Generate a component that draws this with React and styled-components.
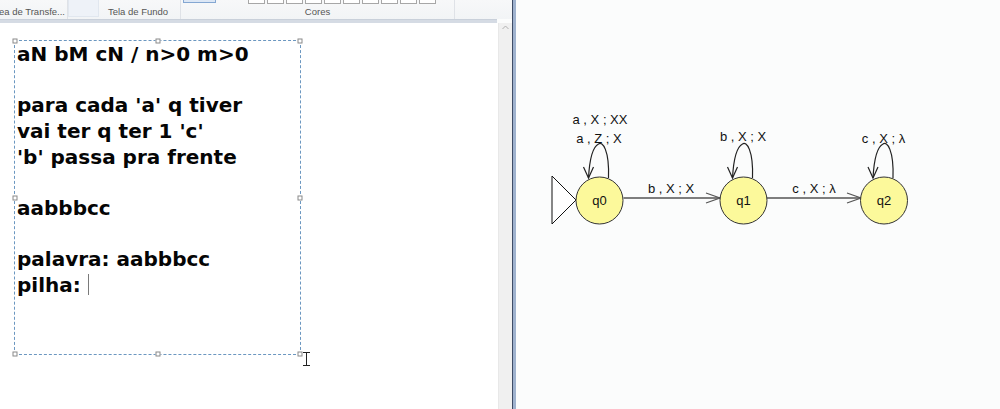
import React from 'react';
import styled, { createGlobalStyle } from 'styled-components';

const GlobalStyle = createGlobalStyle`
  html, body {
    margin: 0;
    padding: 0;
    background: #fbfcfc;
  }
  #root {
    height: 409px;
  }
`;

const Screen = styled.div`
  display: flex;
  width: 1000px;
  height: 409px;
  overflow: hidden;
`;

const PaintWindow = styled.div`
  display: flex;
  flex-direction: column;
  width: 512px;
  height: 100%;
`;

const Ribbon = styled.div`
  display: flex;
  height: 19px;
  background: linear-gradient(#f7f8f9, #f2f4f6);
  font-family: "Liberation Sans", Arial, sans-serif;
  font-size: 9.5px;
  color: #555;
`;

const Group = styled.div`
  position: relative;
  width: ${(p) => p.width}px;
  flex: ${(p) => (p.grow ? 1 : 'none')};
  border-right: ${(p) => (p.last ? 'none' : '1px solid #dfe2e7')};
  display: flex;
  align-items: flex-end;
  justify-content: ${(p) => p.align || 'center'};
  padding-bottom: 2px;
  box-sizing: border-box;
`;

const GroupLabel = styled.span`
  position: relative;
  line-height: 11px;
  white-space: nowrap;
  margin-left: ${(p) => p.offset || 0}px;
`;

const PaleButton = styled.div`
  position: absolute;
  left: 0;
  top: 0;
  width: 31px;
  height: 17px;
  background: #eef2f8;
  border: 1px solid #e1e7ef;
  border-top: none;
  box-sizing: border-box;
`;

const ColorStrip = styled.div`
  position: absolute;
  top: 0;
  left: 67px;
  display: flex;
  gap: 2px;
`;

const Swatch = styled.div`
  width: 15px;
  height: 3px;
  border: 1px solid #a7a7a7;
  border-top: none;
  background: #ffffff;
`;

const SelectedColor = styled.div`
  position: absolute;
  top: 0;
  left: 2px;
  width: 33px;
  height: 3px;
  background: #dce7f5;
  border: 1px solid #84a7d2;
  border-top: none;
  box-sizing: border-box;
`;

const RibbonEdge = styled.div`
  height: 3px;
  background: #d5dbe4;
  border-top: 1px solid #c9d0da;
  margin-right: 15px;
`;

const Workspace = styled.div`
  flex: 1;
  display: flex;
`;

const Canvas = styled.div`
  flex: 1;
  background: #ffffff;
  padding: 17px 0 0 14px;
`;

const TextBox = styled.div`
  position: relative;
  width: 287px;
  height: 315px;
  box-sizing: border-box;
  border: 1px dashed #6b97c0;
  padding: 1px 0 0 2px;
  font-family: "DejaVu Sans", "Liberation Sans", sans-serif;
  font-weight: bold;
  font-size: 20px;
  line-height: 25.67px;
  color: #050505;
`;

const Line = styled.div`
  white-space: pre;
  height: 25.67px;
`;

const Caret = styled.span`
  display: inline-block;
  width: 1px;
  height: 21px;
  margin-left: 7px;
  vertical-align: -3px;
  background: #7a7a7a;
`;

const Handle = styled.div`
  position: absolute;
  width: 5px;
  height: 5px;
  box-sizing: border-box;
  border: 1px solid #8a8a8a;
  background: #ffffff;
  left: ${(p) => p.x};
  top: ${(p) => p.y};
  transform: translate(-50%, -50%);
`;

const IBeam = styled.svg`
  position: absolute;
  left: 287px;
  top: 311px;
`;

const Scrollbar = styled.div`
  width: 14px;
  background: #f0f0f0;
  border-left: 1px solid #e8e8e8;
  display: flex;
  justify-content: center;
  padding-top: 2px;
  box-sizing: border-box;
`;

const WindowFrame = styled.div`
  width: 3px;
  border-left: 1px solid #3e4c66;
  background: #9fb2ce;
`;

const DiagramPane = styled.div`
  flex: 1;
  background: #fbfcfc;
`;

const lines = [
  'aN bM cN / n>0 m>0',
  '',
  "para cada 'a' q tiver",
  "vai ter q ter 1 'c'",
  "'b' passa pra frente",
  '',
  'aabbbcc',
  '',
  'palavra: aabbbcc',
];

const handles = [
  ['0', '0'], ['50%', '0'], ['100%', '0'],
  ['0', '50%'], ['100%', '50%'],
  ['0', '100%'], ['50%', '100%'], ['100%', '100%'],
];

const labelStyle = {
  fontFamily: '"Liberation Sans", Arial, sans-serif',
  fontSize: 13,
  fill: '#111',
};

const Loop = ({ cx }) => {
  const d = `M ${cx + 9} 178 C ${cx + 10} 150, ${cx + 3} 141, ${cx - 1} 144 C ${cx - 7} 147, ${cx - 10} 160, ${cx - 11} 178`;
  return (
    <g stroke="#222" strokeWidth="1.2" fill="none">
      <path d={d} />
      <path d={`M ${cx - 16} 167 L ${cx - 11} 178 L ${cx - 6} 167`} />
    </g>
  );
};

const Edge = ({ x1, x2, y }) => (
  <g stroke="#555" strokeWidth="1.6" fill="none">
    <line x1={x1} y1={y} x2={x2} y2={y} />
    <path d={`M ${x2 - 14} ${y - 5} L ${x2} ${y} L ${x2 - 14} ${y + 5}`} strokeWidth="1.2" />
  </g>
);

const State = ({ cx, name }) => (
  <g>
    <circle cx={cx} cy={200.5} r={23.5} fill="#fcf99b" stroke="#333" strokeWidth="1" />
    <text x={cx} y={205} textAnchor="middle" style={labelStyle}>{name}</text>
  </g>
);

const Label = ({ x, y, children }) => (
  <text x={x} y={y} textAnchor="middle" style={labelStyle}>{children}</text>
);

const Automaton = () => (
  <svg width="484" height="409" viewBox="516 0 484 409">
    <polygon points="552,176 552,224 576,200" fill="#ffffff" stroke="#111" strokeWidth="1" />
    <Edge x1={623.5} x2={720} y={198} />
    <Edge x1={767} x2={861} y={198} />
    <Loop cx={599.5} />
    <Loop cx={743.5} />
    <Loop cx={884} />
    <State cx={599.5} name="q0" />
    <State cx={743.5} name="q1" />
    <State cx={884} name="q2" />
    <Label x={600} y={123.5}>a , X ; XX</Label>
    <Label x={599} y={142.5}>a , Z ; X</Label>
    <Label x={671} y={192.5}>b , X ; X</Label>
    <Label x={743} y={140.5}>b , X ; X</Label>
    <Label x={814} y={193}>c , X ; λ</Label>
    <Label x={883.5} y={142.5}>c , X ; λ</Label>
  </svg>
);

const App = () => (
  <>
    <GlobalStyle />
    <Screen>
      <PaintWindow>
        <Ribbon>
          <Group width={68} align="flex-start">
            <GroupLabel offset={-1}>ea de Transfe...</GroupLabel>
          </Group>
          <Group width={113}>
            <PaleButton />
            <GroupLabel offset={28}>Tela de Fundo</GroupLabel>
          </Group>
          <Group width={274}>
            <SelectedColor />
            <ColorStrip>
              {Array.from({ length: 10 }).map((_, i) => (
                <Swatch key={i} />
              ))}
            </ColorStrip>
            <GroupLabel>Cores</GroupLabel>
          </Group>
          <Group grow last />
        </Ribbon>
        <RibbonEdge />
        <Workspace>
          <Canvas>
            <TextBox>
              {lines.map((l, i) => (
                <Line key={i}>{l}</Line>
              ))}
              <Line>
                pilha:<Caret />
              </Line>
              {handles.map(([x, y], i) => (
                <Handle key={i} x={x} y={y} />
              ))}
              <IBeam width="9" height="14" viewBox="0 0 9 14">
                <path d="M1 0.5 H8 M4.5 0.5 V13.5 M1 13.5 H8" stroke="#222" strokeWidth="1" fill="none" />
              </IBeam>
            </TextBox>
          </Canvas>
          <Scrollbar>
            <svg width="7" height="5" viewBox="0 0 7 5">
              <path d="M0.5 4 L3.5 1 L6.5 4" stroke="#b0b0b0" strokeWidth="1" fill="none" />
            </svg>
          </Scrollbar>
        </Workspace>
      </PaintWindow>
      <WindowFrame />
      <DiagramPane>
        <Automaton />
      </DiagramPane>
    </Screen>
  </>
);

export default App;
